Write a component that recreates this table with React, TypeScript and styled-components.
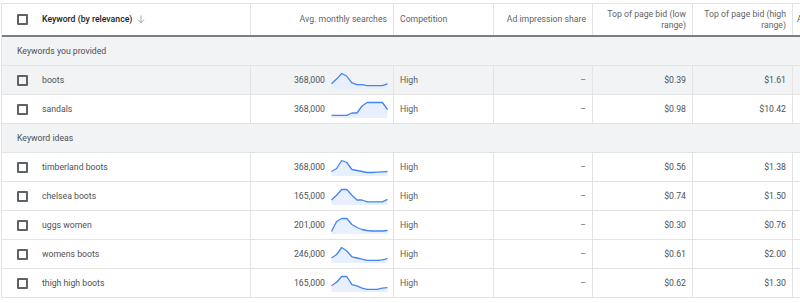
import React from "react";
import styled, { createGlobalStyle } from "styled-components";

const Global = createGlobalStyle`
  html, body { margin: 0; padding: 0; background: #ffffff; }
  body { font-family: Roboto, "Liberation Sans", Arial, sans-serif; }
`;

const COLS = "249px 143px 100px 99px 100px 100px 120px";

const Page = styled.div`
  width: 800px;
  height: 303px;
  overflow: hidden;
  padding: 3px 0 0 1px;
  box-sizing: border-box;
`;

const Table = styled.div`
  width: 920px;
  border-top: 1px solid #e3e3e3;
  border-left: 1px solid #e3e3e3;
  font-size: 8.7px;
  color: #4d5156;
`;

const HeaderRow = styled.div`
  display: grid;
  grid-template-columns: ${COLS};
  height: 31px;
  border-bottom: 2px solid #7d7d7d;
`;

const HeadCell = styled.div<{ $align?: "left" | "right"; $strong?: boolean }>`
  display: flex;
  align-items: center;
  justify-content: ${(p) => (p.$align === "right" ? "flex-end" : "flex-start")};
  text-align: ${(p) => p.$align ?? "left"};
  padding: 0 6px;
  border-right: 1px solid #e3e3e3;
  color: ${(p) => (p.$strong ? "#202124" : "#5f6368")};
  font-weight: ${(p) => (p.$strong ? 500 : 400)};
  line-height: 11px;
  box-sizing: border-box;
  white-space: nowrap;
`;

const KeywordHead = styled(HeadCell)`
  padding-left: 15px;
  gap: 14px;
`;

const LastHead = styled(HeadCell)`
  padding-left: 4px;
`;

const Arrow = styled.svg`
  margin-left: -9px;
  display: block;
`;

const GroupRow = styled.div`
  height: 28px;
  display: flex;
  align-items: center;
  padding-left: 15px;
  background: #f1f3f4;
  border-bottom: 1px solid #e3e3e3;
  color: #4d5156;
`;

const Row = styled.div<{ $hover?: boolean }>`
  display: grid;
  grid-template-columns: ${COLS};
  height: 28px;
  border-bottom: 1px solid #e3e3e3;
  background: ${(p) => (p.$hover ? "#f1f3f4" : "#ffffff")};
`;

const Cell = styled.div<{ $align?: "left" | "right"; $muted?: boolean }>`
  display: flex;
  align-items: center;
  justify-content: ${(p) => (p.$align === "right" ? "flex-end" : "flex-start")};
  padding: 0 6px;
  border-right: 1px solid #e3e3e3;
  box-sizing: border-box;
  white-space: nowrap;
  font-weight: 400;
  color: ${(p) => (p.$muted ? "#5a5e63" : "inherit")};
`;

const KeywordCell = styled(Cell)`
  padding-left: 15px;
  gap: 14px;
`;

const SearchCell = styled(Cell)`
  padding-right: 5px;
  gap: 6px;
`;

const Box = styled.span`
  width: 11px;
  height: 11px;
  box-sizing: border-box;
  border: 2px solid #5f6368;
  border-radius: 1px;
  flex: none;
  background: transparent;
`;

const Dash = styled.span`
  color: #6b6f74;
`;

function Spark({ data }: { data: number[] }) {
  const w = 57;
  const h = 17;
  const max = Math.max(...data);
  const pts = data.map((v, i) => {
    const x = (i / (data.length - 1)) * (w - 1) + 0.5;
    const y = h - 1.5 - (v / max) * (h - 3);
    return [x, y];
  });
  const line = pts.map((p) => `${p[0].toFixed(1)},${p[1].toFixed(1)}`).join(" ");
  const area = `0.5,${h} ${line} ${w - 0.5},${h}`;
  return (
    <svg width={w} height={h} viewBox={`0 0 ${w} ${h}`} style={{ display: "block", flex: "none" }}>
      <polygon points={area} fill="#e8f0fe" />
      <polyline points={line} fill="none" stroke="#4285f4" strokeWidth={1.3} strokeLinejoin="round" />
    </svg>
  );
}

type Kw = { kw: string; searches: string; spark: number[]; low: string; high: string; hover?: boolean };

const provided: Kw[] = [
  { kw: "boots", searches: "368,000", spark: [4, 9, 15, 12, 5, 3, 3, 2, 2, 2, 2, 4], low: "$0.39", high: "$1.61", hover: true },
  { kw: "sandals", searches: "368,000", spark: [1, 1, 1, 1, 3, 3, 9, 12, 12, 12, 12, 6], low: "$0.98", high: "$10.42" },
];

const ideas: Kw[] = [
  { kw: "timberland boots", searches: "368,000", spark: [3, 6, 14, 12, 5, 4, 3, 2, 2, 2.3, 2.6, 3], low: "$0.56", high: "$1.38" },
  { kw: "chelsea boots", searches: "165,000", spark: [3, 7, 12, 12, 7, 3, 3, 1.5, 1.5, 1.5, 1.5, 3.5], low: "$0.74", high: "$1.50" },
  { kw: "uggs women", searches: "201,000", spark: [1, 11, 14, 14, 8, 5, 3, 2, 1.5, 1.5, 1.5, 2], low: "$0.30", high: "$0.76" },
  { kw: "womens boots", searches: "246,000", spark: [3, 6, 12, 9, 4, 3, 2, 1, 1, 1, 1.5, 2.5], low: "$0.61", high: "$2.00" },
  { kw: "thigh high boots", searches: "165,000", spark: [4, 7, 12, 12, 5, 4, 2, 1, 1, 1, 2, 2.5], low: "$0.62", high: "$1.30" },
];

function DataRow({ r }: { r: Kw }) {
  return (
    <Row $hover={r.hover}>
      <KeywordCell>
        <Box />
        <span>{r.kw}</span>
      </KeywordCell>
      <SearchCell $align="right">
        <span>{r.searches}</span>
        <Spark data={r.spark} />
      </SearchCell>
      <Cell $muted>High</Cell>
      <Cell $align="right">
        <Dash>–</Dash>
      </Cell>
      <Cell $align="right">{r.low}</Cell>
      <Cell $align="right">{r.high}</Cell>
      <Cell />
    </Row>
  );
}

export default function App() {
  return (
    <Page>
      <Global />
      <Table>
        <HeaderRow>
          <KeywordHead $strong>
            <Box />
            <span>Keyword (by relevance)</span>
            <Arrow width="8" height="9" viewBox="0 0 8 9">
              <path d="M4 0.5 V7.5 M1 4.7 L4 7.7 L7 4.7" fill="none" stroke="#9aa0a6" strokeWidth="0.9" />
            </Arrow>
          </KeywordHead>
          <HeadCell $align="right">Avg. monthly searches</HeadCell>
          <HeadCell>Competition</HeadCell>
          <HeadCell $align="right">Ad impression share</HeadCell>
          <HeadCell $align="right">
            Top of page bid (low
            <br />
            range)
          </HeadCell>
          <HeadCell $align="right">
            Top of page bid (high
            <br />
            range)
          </HeadCell>
          <LastHead>Account status</LastHead>
        </HeaderRow>
        <GroupRow>Keywords you provided</GroupRow>
        {provided.map((r) => (
          <DataRow key={r.kw} r={r} />
        ))}
        <GroupRow>Keyword ideas</GroupRow>
        {ideas.map((r) => (
          <DataRow key={r.kw} r={r} />
        ))}
      </Table>
    </Page>
  );
}
